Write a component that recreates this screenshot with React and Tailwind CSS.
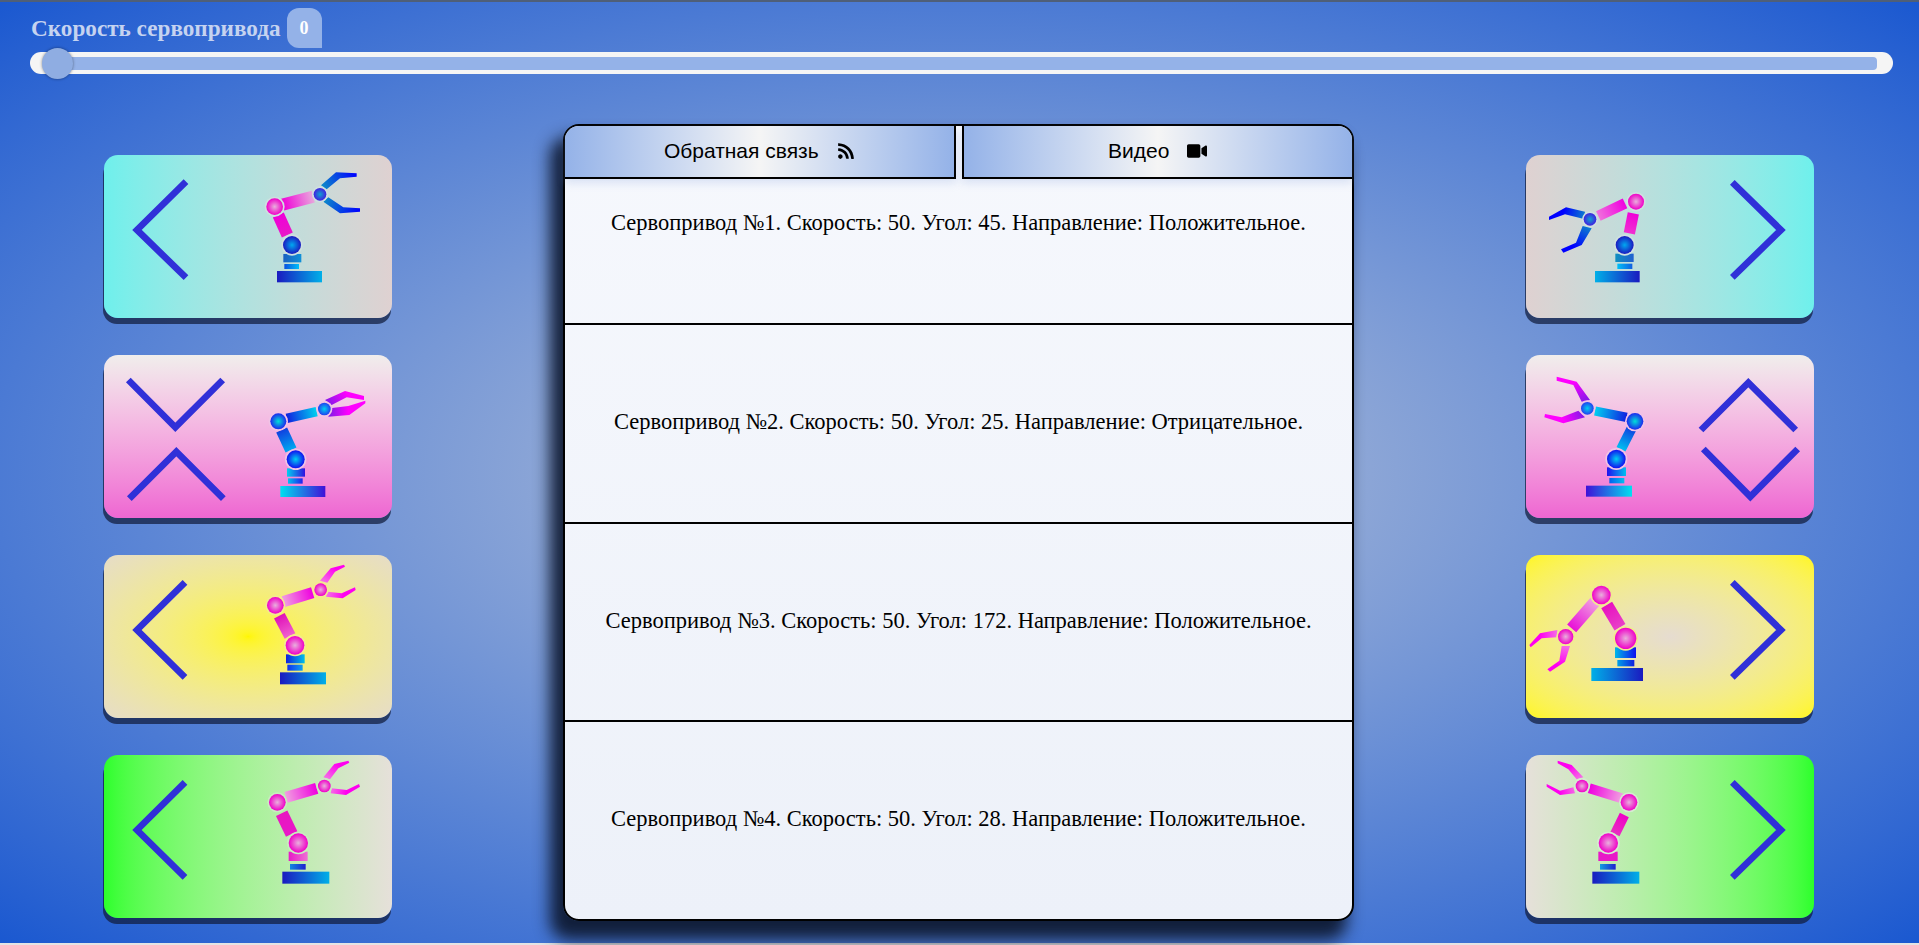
import React from "react";
import { FaRss, FaVideo } from "react-icons/fa";

const BLUE_JOINT = ["#00a8f0", "#1a1ac0"];
const CYAN_JOINT = ["#00e0d8", "#1c28ee"];
const PINK_JOINT = ["#e8b0dc", "#f000c8"];
const WRIST_BLUE = ["#10a0d0", "#4020e0"];

const INK = "#3030d8";
const left = "M285 127L141 270L285 412";
const right = "M667 127L813 270L667 412";

const cards = {
  left: [
    {
      bg: "bg-gradient-to-r from-[#6ef0ec] to-[#dfd1d1]",
      box: "312 465 864 489",
      arrows: ["M558 545L411 690L558 833"],
      halo: "#cfe0e0",
      base: [831, 813, 135, 34, "#1a1ac0", "#00b0e8"],
      small: [853, 792, 44, 15, "#0a50e0", "#00c0f8"],
      cup: [850, 762, 54, 25, "#1a60c0", "#1090d8"],
      j1: [876, 735, 27, BLUE_JOINT],
      arm1: [835, 645, 862, 705, 36, "#f000d8", "#e818c8"],
      j2: [824, 620, 25, PINK_JOINT],
      arm2: [848, 614, 940, 590, 36, "#f000d8", "#e8a8dc"],
      j3: [960, 583, 19, WRIST_BLUE],
      claw1: ["963,556 1008,517 1070,520 1070,530 1020,535 980,568", "#10a0c0", "#0000ff", 1070, 525],
      claw2: ["970,605 985,592 1030,622 1080,625 1080,635 1020,640", "#10a0c0", "#0000ff", 1080, 630],
    },
    {
      bg: "bg-gradient-to-b from-[#f0eeec] to-[#ee66d2]",
      box: "42 45 864 489",
      arrows: ["M115 120L256 262L398 120", "M118 476L259 335L400 476"],
      halo: "#f0c4e6",
      base: [571, 438, 135, 33, "#00e0f0", "#4010d8"],
      small: [594, 415, 44, 16, "#00c0f0", "#2020f0"],
      cup: [591, 385, 54, 25, "#00d0f0", "#3010e0"],
      j1: [617, 358, 27, ["#00d0f0", "#1010f0"]],
      arm1: [575, 270, 603, 330, 36, "#1040e0", "#00a8f0"],
      j2: [565, 244, 24, CYAN_JOINT],
      arm2: [590, 235, 680, 215, 28, "#1020e0", "#00d0f0"],
      j3: [703, 207, 19, ["#00d0f0", "#2040f0"]],
      claw1: ["705,180 765,153 822,168 822,180 770,172 725,195", "#6020e0", "#ff00ff", 770, 160],
      claw2: ["720,205 775,198 826,182 826,190 778,225 715,230", "#6020e0", "#ff00ff", 775, 210],
    },
    {
      bg: "bg-radial from-[#fff600] to-[#e6dcc8]",
      box: "42 45 864 489",
      arrows: [left],
      halo: "#f2ea90",
      base: [570, 397, 138, 36, "#1a1ac0", "#00b0e8"],
      small: [592, 374, 46, 18, "#1030f0", "#10a0f0"],
      cup: [588, 343, 56, 27, "#1020e0", "#00c0e8"],
      j1: [615, 316, 28, PINK_JOINT],
      arm1: [568, 227, 600, 288, 36, "#e010b8", "#f060d0"],
      j2: [556, 196, 25, PINK_JOINT],
      arm2: [580, 185, 668, 158, 34, "#f0a0e0", "#f000e0"],
      j3: [692, 149, 19, PINK_JOINT],
      claw1: ["690,122 722,85 762,74 765,80 735,95 712,128", "#f0a0e0", "#ff00f0", 735, 85],
      claw2: ["712,155 755,160 795,142 797,150 758,175 708,170", "#f0a0e0", "#ff00f0", 760, 165],
    },
    {
      bg: "bg-gradient-to-r from-[#2bff2b] to-[#e6e0da]",
      box: "42 45 864 489",
      arrows: [left],
      halo: "#c8ecc0",
      base: [577, 395, 141, 36, "#1a1ac0", "#00b0e8"],
      small: [600, 372, 47, 17, "#1088e0", "#2020d0"],
      cup: [596, 335, 57, 28, "#e818c8", "#ee70d4"],
      j1: [625, 309, 29, PINK_JOINT],
      arm1: [575, 220, 605, 282, 38, "#e818c0", "#e818c8"],
      j2: [562, 187, 25, PINK_JOINT],
      arm2: [588, 172, 680, 145, 34, "#f0a0e0", "#f000e0"],
      j3: [703, 138, 19, PINK_JOINT],
      claw1: ["700,112 733,72 775,62 778,68 745,85 720,118", "#f0a0e0", "#ff00f0", 745, 75],
      claw2: ["725,145 770,150 807,132 810,140 768,165 722,160", "#f0a0e0", "#ff00f0", 770, 155],
    },
  ],
  right: [
    {
      bg: "bg-gradient-to-r from-[#dfd1d1] to-[#6ef0ec]",
      box: "48 45 864 489",
      arrows: [right],
      halo: "#cfe0e0",
      base: [255, 393, 134, 34, "#00b0e8", "#1a1ac0"],
      small: [322, 371, 45, 16, "#00c0f8", "#1060e0"],
      cup: [316, 341, 55, 25, "#1090c0", "#2060d0"],
      j1: [344, 315, 27, BLUE_JOINT],
      arm1: [370, 220, 358, 280, 34, "#f000d8", "#f030d0"],
      j2: [378, 185, 24, PINK_JOINT],
      arm2: [345, 190, 265, 228, 32, "#f000e0", "#f070dc"],
      j3: [240, 238, 19, WRIST_BLUE],
      claw1: ["225,215 168,202 117,230 117,240 165,223 222,237", "#10a0c0", "#0000ff", 160, 215],
      claw2: ["218,258 245,265 215,315 160,338 153,328 198,308", "#10a0c0", "#0000ff", 190, 320],
    },
    {
      bg: "bg-gradient-to-b from-[#f0eeec] to-[#ee66d2]",
      box: "48 45 864 489",
      arrows: ["M573 270L715 128L857 270", "M580 327L721 470L863 327"],
      halo: "#f0c4e6",
      base: [228, 437, 138, 33, "#4010d8", "#00e0f0"],
      small: [298, 414, 45, 16, "#0060f0", "#00c0f0"],
      cup: [291, 382, 57, 26, "#2010f0", "#00c0f0"],
      j1: [319, 357, 28, ["#00d0f0", "#1010f0"]],
      arm1: [365, 265, 333, 328, 30, "#1040e0", "#00c0f0"],
      j2: [375, 244, 25, CYAN_JOINT],
      arm2: [255, 213, 350, 232, 28, "#00d0f0", "#1020e0"],
      j3: [232, 205, 19, ["#00d0f0", "#2040f0"]],
      claw1: ["140,110 200,125 240,180 215,185 190,135 140,122", "#6020e0", "#ff00ff", 190, 125],
      claw2: ["105,222 155,232 205,212 225,232 160,250 103,232", "#6020e0", "#ff00ff", 160, 240],
    },
    {
      bg: "bg-radial from-[#e6dcd0] to-[#fff614]",
      box: "48 45 864 489",
      arrows: [right],
      halo: "#f0ea90",
      base: [244, 384, 155, 39, "#00b0e8", "#1a1ac0"],
      small: [322, 360, 51, 19, "#00a0e8", "#1020e0"],
      cup: [315, 322, 63, 32, "#00b8e8", "#1010f0"],
      j1: [347, 295, 32, PINK_JOINT],
      arm1: [290, 195, 330, 262, 38, "#e810c0", "#e840c8"],
      j2: [274, 165, 28, PINK_JOINT],
      arm2: [255, 185, 185, 265, 36, "#f0a0e0", "#e810d8"],
      j3: [167, 290, 23, PINK_JOINT],
      claw1: ["142,270 90,280 58,315 62,322 95,295 140,292", "#f0a0e0", "#ff00f0", 90, 290],
      claw2: ["155,318 180,318 165,365 120,395 112,388 148,362", "#f0a0e0", "#ff00f0", 150, 375],
    },
    {
      bg: "bg-gradient-to-r from-[#e6e0da] to-[#2bff2b]",
      box: "48 45 864 489",
      arrows: [right],
      halo: "#d4ecd0",
      base: [247, 395, 141, 36, "#1a1ac0", "#00b0e8"],
      small: [270, 372, 47, 17, "#10a0e0", "#2020d0"],
      cup: [265, 335, 58, 28, "#e818c8", "#e818c8"],
      j1: [295, 309, 29, PINK_JOINT],
      arm1: [343, 225, 315, 282, 30, "#f000c8", "#e830c0"],
      j2: [357, 187, 25, PINK_JOINT],
      arm2: [238, 145, 335, 175, 30, "#f000e0", "#f0a0e0"],
      j3: [216, 138, 19, PINK_JOINT],
      claw1: ["143,62 185,75 220,112 200,118 175,88 143,70", "#f0a0e0", "#ff00f0", 175, 80],
      claw2: ["110,132 150,152 190,142 195,160 150,165 110,140", "#f0a0e0", "#ff00f0", 150, 158],
    },
  ],
};

const rows = [
  "Сервопривод №1. Скорость: 50. Угол: 45. Направление: Положительное.",
  "Сервопривод №2. Скорость: 50. Угол: 25. Направление: Отрицательное.",
  "Сервопривод №3. Скорость: 50. Угол: 172. Направление: Положительное.",
  "Сервопривод №4. Скорость: 50. Угол: 28. Направление: Положительное.",
];

const armPoints = ([x1, y1, x2, y2, w]) => {
  const len = Math.hypot(x2 - x1, y2 - y1);
  const nx = ((y2 - y1) / len) * (w / 2);
  const ny = ((x1 - x2) / len) * (w / 2);
  return `${x1 + nx},${y1 + ny} ${x2 + nx},${y2 + ny} ${x2 - nx},${y2 - ny} ${x1 - nx},${y1 - ny}`;
};

const Line = ({ id, x1, y1, x2, y2, from, to }) => (
  <linearGradient id={id} gradientUnits="userSpaceOnUse" x1={x1} y1={y1} x2={x2} y2={y2}>
    <stop offset="0" stopColor={from} />
    <stop offset="1" stopColor={to} />
  </linearGradient>
);

const Block = ({ id, rect }) => {
  const [x, y, w, h, from, to] = rect;
  return (
    <>
      <Line id={id} x1={x} y1={y} x2={x + w} y2={y} from={from} to={to} />
      <rect x={x} y={y} width={w} height={h} fill={`url(#${id})`} />
    </>
  );
};

const Arm = ({ id, arm }) => (
  <>
    <Line id={id} x1={arm[0]} y1={arm[1]} x2={arm[2]} y2={arm[3]} from={arm[5]} to={arm[6]} />
    <polygon points={armPoints(arm)} fill={`url(#${id})`} />
  </>
);

const Claw = ({ id, claw, wrist }) => (
  <>
    <Line id={id} x1={wrist[0]} y1={wrist[1]} x2={claw[3]} y2={claw[4]} from={claw[1]} to={claw[2]} />
    <polygon points={claw[0]} fill={`url(#${id})`} />
  </>
);

const Joint = ({ id, joint, halo }) => {
  const [cx, cy, r, colors] = joint;
  return (
    <>
      <radialGradient id={id}>
        <stop offset="0" stopColor={colors[0]} />
        <stop offset="1" stopColor={colors[1]} />
      </radialGradient>
      <circle cx={cx} cy={cy} r={r + 5} fill={halo} />
      <circle cx={cx} cy={cy} r={r} fill={`url(#${id})`} />
    </>
  );
};

const Card = ({ card, name }) => (
  <div className={`h-[163px] w-[288px] rounded-[14px] shadow-[-1px_6px_0_rgba(16,28,60,0.72)] ${card.bg}`}>
    <svg viewBox={card.box} className="block h-full w-full">
      {card.arrows.map((d) => (
        <path key={d} d={d} fill="none" stroke={INK} strokeWidth="20" />
      ))}
      <Block id={`${name}-base`} rect={card.base} />
      <Block id={`${name}-small`} rect={card.small} />
      <Block id={`${name}-cup`} rect={card.cup} />
      <Arm id={`${name}-arm1`} arm={card.arm1} />
      <Arm id={`${name}-arm2`} arm={card.arm2} />
      <Claw id={`${name}-claw1`} claw={card.claw1} wrist={card.j3} />
      <Claw id={`${name}-claw2`} claw={card.claw2} wrist={card.j3} />
      <Joint id={`${name}-j1`} joint={card.j1} halo={card.halo} />
      <Joint id={`${name}-j2`} joint={card.j2} halo={card.halo} />
      <Joint id={`${name}-j3`} joint={card.j3} halo={card.halo} />
    </svg>
  </div>
);

const CardColumn = ({ side }) => (
  <div className="flex flex-col gap-[37px] pt-[31px]">
    {cards[side].map((card, i) => (
      <Card key={i} card={card} name={`${side}${i}`} />
    ))}
  </div>
);

const Tab = ({ label, icon, className }) => (
  <button
    className={`flex h-[53px] flex-1 items-center justify-center gap-[18px] border-b-2 border-black bg-gradient-to-r from-[#94b2e8] via-[#f5f5f5] to-[#94b2e8] pb-[2px] font-['Liberation_Sans',sans-serif] text-[21px] text-black shadow-[0_4px_8px_rgba(130,160,220,0.25)] ${className}`}
  >
    {label}
    {icon}
  </button>
);

export default function App() {
  return (
    <div className="flex h-[945px] flex-col overflow-hidden">
      <div className="h-[2px] bg-[#4f5f78]" />
      <div className="flex-1 bg-radial from-[#bbc3d5] to-[#1a58d0] pt-[6px]">
        <div className="flex h-[40px] items-center pl-[31px] font-['Liberation_Serif',serif] font-bold">
          <span className="text-[23.2px] text-[#c5d3f0]">Скорость сервопривода</span>
          <span className="ml-[6px] flex h-[40px] w-[35px] items-center justify-center rounded-[12px] rounded-br-none bg-[#94b2e8] text-[18px] text-white">
            0
          </span>
        </div>

        <div className="relative mx-[30px] mt-[4px] flex h-[22px] w-[1863px] items-center rounded-full bg-[#f5f5f5] px-[16px]">
          <div className="h-[13px] w-full rounded-[4px] bg-[#94b2e8]" />
          <div className="absolute left-[12px] top-[-4px] h-[31px] w-[31px] rounded-full bg-[#8fade2] shadow-[0_0_3px_rgba(0,0,0,0.45)]" />
        </div>

        <div className="mt-[50px] flex pl-[104px]">
          <CardColumn side="left" />
          <div className="relative ml-[171px] mr-[172px] flex h-[797px] w-[791px] flex-col rounded-[16px] border-2 border-black bg-gradient-to-b from-[#f6f8fd] to-[#edf1f9] font-['Liberation_Serif',serif] text-[22.5px] text-black shadow-[-10px_16px_16px_3px_rgba(15,26,51,0.95)]">
            {rows.map((text, i) => (
              <div key={text} className={`flex flex-1 items-center justify-center pb-[3px] ${i > 0 ? "border-t-2 border-black" : ""}`}>
                {text}
              </div>
            ))}
            <div className="absolute inset-x-0 top-0 flex gap-[6px]">
              <Tab label="Обратная связь" icon={<FaRss className="text-[18px]" />} className="rounded-tl-[14px] border-r-2" />
              <Tab label="Видео" icon={<FaVideo className="text-[20px]" />} className="rounded-tr-[14px] border-l-2" />
            </div>
          </div>
          <CardColumn side="right" />
        </div>
      </div>
      <div className="h-[2px] bg-[#e4e4e4]" />
    </div>
  );
}
